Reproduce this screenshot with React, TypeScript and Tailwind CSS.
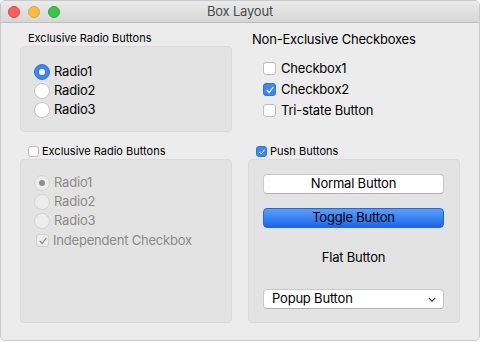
import React from "react";

const font = { fontFamily: "Inter, 'Noto Sans', 'Liberation Sans', sans-serif" };

const Radio: React.FC<{ label: string; checked?: boolean; disabled?: boolean }> = ({
  label,
  checked,
  disabled,
}) => {
  let circle = "border border-[#c4c4c4] bg-white";
  if (checked && !disabled) circle = "bg-[#3d85f7] border border-[#2f74e6]";
  if (disabled) circle = "border border-[#d3d3d3] bg-[#ececec]";
  return (
    <div className="flex h-[19px] items-center gap-[4px]">
      <div className={`flex h-[16px] w-[16px] items-center justify-center rounded-full ${circle}`}>
        {checked && (
          <div
            className={`h-[6px] w-[6px] rounded-full ${disabled ? "bg-[#8e8e8e]" : "bg-white"}`}
          />
        )}
      </div>
      <span className={`text-[13px] ${disabled ? "text-[#8a8a8a]" : "text-black"}`}>{label}</span>
    </div>
  );
};

const Check: React.FC<{ checked?: boolean; disabled?: boolean; size?: number }> = ({
  checked,
  disabled,
  size = 13,
}) => {
  const cls =
    checked && !disabled
      ? "bg-[#3d85f7] border-[#2f74e6]"
      : disabled
        ? "bg-[#ececec] border-[#d0d0d0]"
        : "bg-white border-[#bcbcbc]";
  return (
    <div
      className={`flex shrink-0 items-center justify-center rounded-[3px] border ${cls}`}
      style={{ width: size, height: size }}
    >
      {checked && (
        <svg viewBox="0 0 12 12" width={size - 3} height={size - 3}>
          <path
            d="M2.5 6.3 L5 9 L9.6 2.8"
            fill="none"
            stroke={disabled ? "#8e8e8e" : "#fff"}
            strokeWidth="1.5"
            strokeLinecap="round"
            strokeLinejoin="round"
          />
        </svg>
      )}
    </div>
  );
};

const CheckRow: React.FC<{ label: string; checked?: boolean }> = ({ label, checked }) => (
  <div className="flex h-[21px] items-center gap-[5px]">
    <Check checked={checked} />
    <span className="text-[13px] text-black">{label}</span>
  </div>
);

const App: React.FC = () => {
  return (
    <div className="h-[342px] w-[480px] bg-white tracking-[-0.2px]" style={font}>
      <div className="flex h-[341px] w-[480px] flex-col overflow-hidden rounded-[5px] border border-[#c9c9c9] bg-[#ececec]">
        <div className="relative flex h-[22px] shrink-0 items-center border-b border-[#bdbdbd] bg-gradient-to-b from-[#ebebeb] to-[#d6d6d6]">
          <div className="flex items-center gap-[8px] pl-[7px]">
            <div className="h-[12px] w-[12px] rounded-full border border-[#e0443e] bg-[#fc605c]" />
            <div className="h-[12px] w-[12px] rounded-full border border-[#dea236] bg-[#fdbc40]" />
            <div className="h-[12px] w-[12px] rounded-full border border-[#27aa35] bg-[#34c84a]" />
          </div>
          <div className="absolute inset-0 flex items-center justify-center text-[13px] text-[#4a4a4a]">
            Box Layout
          </div>
        </div>

        <div className="grid grid-cols-[212px_212px] gap-x-[16px] px-[19px] pt-[8px]">
          {/* top left */}
          <div className="flex flex-col">
            <div className="flex h-[15px] items-center pl-[8px] text-[11px] tracking-normal text-black">
              Exclusive Radio Buttons
            </div>
            <div className="flex h-[86px] flex-col rounded-[4px] border border-[#dadada] bg-[#e3e3e3] pl-[13px] pt-[15px]">
              <Radio label="Radio1" checked />
              <Radio label="Radio2" />
              <Radio label="Radio3" />
            </div>
          </div>

          {/* top right */}
          <div className="flex flex-col">
            <div className="flex h-[18px] items-center pl-[4px] text-[13px] text-black">
              Non-Exclusive Checkboxes
            </div>
            <div className="mt-[9px] flex flex-col pl-[15px]">
              <CheckRow label="Checkbox1" />
              <CheckRow label="Checkbox2" checked />
              <CheckRow label="Tri-state Button" />
            </div>
          </div>

          {/* bottom left */}
          <div className="mt-[13px] flex flex-col">
            <div className="flex h-[13px] items-center gap-[3px] pl-[8px] text-[11px] tracking-normal text-black">
              <Check size={11} />
              <span>Exclusive Radio Buttons</span>
            </div>
            <div className="mt-[1px] flex h-[164px] flex-col rounded-[4px] border border-[#dadada] bg-[#e3e3e3] pl-[13px] pt-[13px]">
              <Radio label="Radio1" checked disabled />
              <Radio label="Radio2" disabled />
              <Radio label="Radio3" disabled />
              <div className="flex h-[21px] items-center gap-[4px] pl-[2px]">
                <Check checked disabled />
                <span className="text-[13px] text-[#8a8a8a]">Independent Checkbox</span>
              </div>
            </div>
          </div>

          {/* bottom right */}
          <div className="mt-[13px] flex flex-col">
            <div className="flex h-[13px] items-center gap-[3px] pl-[8px] text-[11px] tracking-normal text-black">
              <Check size={11} checked />
              <span>Push Buttons</span>
            </div>
            <div className="mt-[1px] flex h-[164px] flex-col rounded-[4px] border border-[#dadada] bg-[#e3e3e3] pl-[14px] pr-[15px] pt-[14px]">
              <button className="flex h-[20px] items-center justify-center rounded-[4px] border border-[#c8c8c8] border-b-[#b0b0b0] bg-white text-[13px] text-black">
                Normal Button
              </button>
              <button className="mt-[14px] flex h-[20px] items-center justify-center rounded-[4px] border border-[#1f66e0] bg-gradient-to-b from-[#5b9ef8] to-[#1866ec] text-[13px] text-black">
                Toggle Button
              </button>
              <div className="mt-[20px] flex h-[20px] items-center justify-center text-[13px] text-black">
                Flat Button
              </div>
              <div className="mt-[21px] flex h-[20px] items-center justify-between rounded-[4px] border border-[#c8c8c8] border-b-[#b0b0b0] bg-white pl-[8px] pr-[7px] text-[13px] text-black">
                <span>Popup Button</span>
                <svg viewBox="0 0 10 6" width="8" height="5">
                  <path d="M1 1 L5 5 L9 1" fill="none" stroke="#333" strokeWidth="1.4" />
                </svg>
              </div>
            </div>
          </div>
        </div>
      </div>
    </div>
  );
};

export default App;
